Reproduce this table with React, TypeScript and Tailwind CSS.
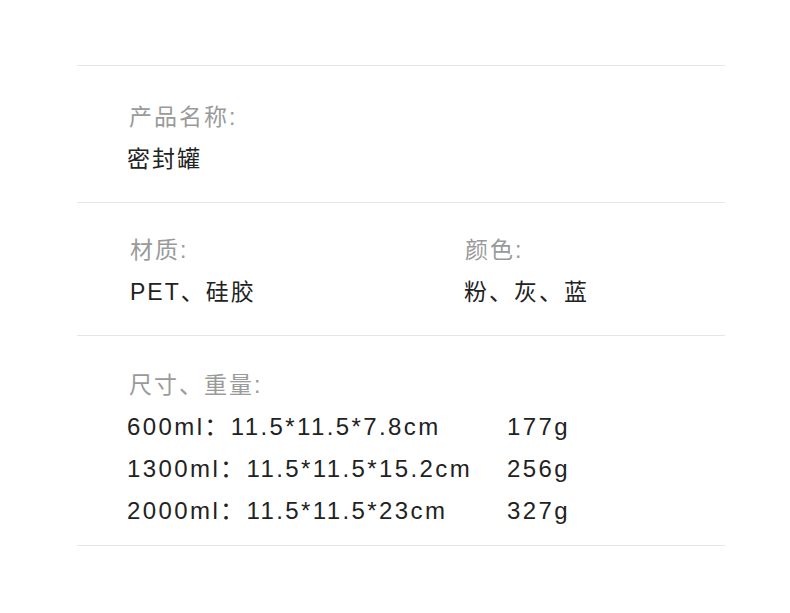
const font = { fontFamily: '"Liberation Sans", "Noto Sans CJK SC", sans-serif' };

const sizes = [
  { size: "600ml：11.5*11.5*7.8cm", weight: "177g" },
  { size: "1300ml：11.5*11.5*15.2cm", weight: "256g" },
  { size: "2000ml：11.5*11.5*23cm", weight: "327g" },
];

export default function App() {
  return (
    <div className="w-[790px] h-[613px] bg-white pt-[65px]" style={font}>
      <div className="mx-[77px] w-[648px] border-t border-[#e6e6e6]">
        {/* 产品名称 */}
        <section className="pl-[52px] pt-[30px] pb-[22px] border-b border-[#e6e6e6] text-[23px] leading-[42px] tracking-[2px]">
          <div className="text-[#9a9a9a]">产品名称:</div>
          <div className="text-[#222] -ml-[2px]">密封罐</div>
        </section>

        {/* 材质 / 颜色 */}
        <section className="pl-[53px] pt-[26px] pb-[22px] border-b border-[#e6e6e6] text-[23px] leading-[42px] tracking-[2px] flex">
          <div className="w-[335px]">
            <div className="text-[#9a9a9a]">材质:</div>
            <div className="text-[#222]">PET、硅胶</div>
          </div>
          <div>
            <div className="text-[#9a9a9a]">颜色:</div>
            <div className="text-[#222] -ml-[1px]">粉、灰、蓝</div>
          </div>
        </section>

        {/* 尺寸、重量 */}
        <section className="pl-[50px] pt-[28px] pb-[13px] border-b border-[#e6e6e6] leading-[42px]">
          <div className="text-[#9a9a9a] text-[23px] tracking-[2px] ml-[2px]">尺寸、重量:</div>
          {sizes.map((r) => (
            <div key={r.weight} className="flex text-[#222] text-[24px] tracking-[2.4px]">
              <div className="w-[380px] whitespace-nowrap">{r.size}</div>
              <div>{r.weight}</div>
            </div>
          ))}
        </section>
      </div>
    </div>
  );
}
